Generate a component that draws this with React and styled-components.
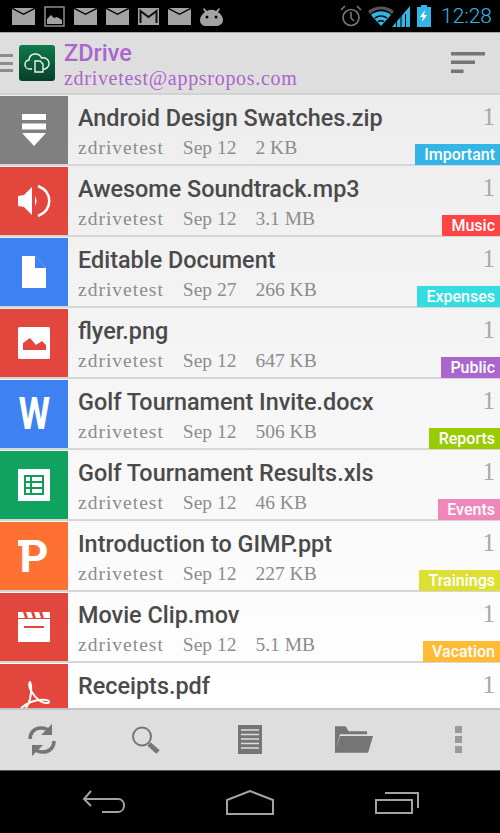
import React from "react";
import styled, { createGlobalStyle } from "styled-components";

const GlobalStyle = createGlobalStyle`
  html, body {
    margin: 0;
    padding: 0;
    background: #000;
    font-family: Roboto, sans-serif;
  }
`;

const Screen = styled.div`
  width: 500px;
  height: 833px;
  display: flex;
  flex-direction: column;
  overflow: hidden;
`;

const StatusBar = styled.div`
  height: 32px;
  flex: none;
  background: #000;
  display: flex;
  align-items: center;
  justify-content: space-between;
  padding: 0 8px 0 12px;
  box-sizing: border-box;
`;

const StatusGroup = styled.div`
  display: flex;
  align-items: center;
  gap: ${(p) => p.$gap || 0}px;
`;

const Clock = styled.span`
  font: 300 21px/32px Roboto, sans-serif;
  color: #33b5e5;
  margin-left: 10px;
`;

const Header = styled.div`
  height: 63px;
  flex: none;
  box-sizing: border-box;
  background: #dedede;
  border-top: 1px solid #a8a8a8;
  border-bottom: 2px solid #d2d2d2;
  display: flex;
  align-items: center;
  padding-right: 15px;
`;

const Hamburger = styled.div`
  width: 13px;
  height: 18px;
  margin-right: 6px;
  display: flex;
  flex-direction: column;
  justify-content: space-between;
  i {
    display: block;
    height: 3px;
    background: #8c8c8c;
  }
`;

const Logo = styled.div`
  width: 36px;
  height: 36px;
  border-radius: 3px;
  background: linear-gradient(#0f7a4c, #06402a);
  display: flex;
  align-items: center;
  justify-content: center;
  margin-right: 9px;
`;

const AppInfo = styled.div`
  flex: 1;
  color: #aa66cc;
  padding-top: 3px;
`;

const AppName = styled.div`
  font: 500 23.5px/27px Roboto, sans-serif;
`;

const AppMail = styled.div`
  font: 400 20px/23px "Liberation Serif", serif;
  letter-spacing: 0.7px;
`;

const List = styled.div`
  flex: 1;
  min-height: 0;
  overflow: hidden;
  background: linear-gradient(#ededed, #ffffff);
`;

const Row = styled.div`
  height: 71px;
  box-sizing: border-box;
  padding-top: 1px;
  border-bottom: 2px solid #d6d6d6;
  display: flex;
`;

const Tile = styled.div`
  width: 68px;
  height: 68px;
  flex: none;
  background: ${(p) => p.$color};
  display: flex;
  align-items: center;
  justify-content: center;
  color: #fff;
`;

const Body = styled.div`
  flex: 1;
  padding: 6px 0 0 10px;
  min-width: 0;
`;

const Title = styled.div`
  font: 500 23.4px/32px Roboto, sans-serif;
  color: #4a4a4a;
  white-space: nowrap;
`;

const Meta = styled.div`
  display: flex;
  gap: 19px;
  margin-top: 2px;
  font: 400 19.5px/24px "Liberation Serif", serif;
  color: #8c8c8c;
`;

const Owner = styled.span`
  letter-spacing: 1px;
`;

const Side = styled.div`
  flex: none;
  display: flex;
  flex-direction: column;
  align-items: flex-end;
  justify-content: space-between;
  height: 69px;
`;

const Count = styled.span`
  font: 400 25px/32px "Liberation Serif", serif;
  color: #a8a8a8;
  padding: 5px 5px 0 0;
`;

const Tag = styled.span`
  height: 21px;
  padding: 0 5px 0 9.5px;
  background: ${(p) => p.$color};
  color: #fff;
  font: 500 16px/21px Roboto, sans-serif;
`;

const Toolbar = styled.div`
  height: 62px;
  flex: none;
  box-sizing: border-box;
  background: #dedede;
  border-top: 2px solid #c4c4c4;
  display: flex;
  justify-content: space-between;
  align-items: center;
  padding: 0 23px 1px;
`;

const ToolButton = styled.div`
  width: 38px;
  display: flex;
  justify-content: center;
`;

const NavBar = styled.div`
  height: 63px;
  flex: none;
  background: #000;
  border-top: 1px solid #555;
  display: flex;
  justify-content: space-between;
  align-items: center;
  padding: 0 80px 0 82px;
  box-sizing: border-box;
`;

const WordLetter = styled.span`
  font: 700 44px/1 Roboto, sans-serif;
  color: #fff;
  transform: scaleX(0.82);
`;

const SlideLetter = styled.span`
  position: relative;
  font: 700 45px/1 Roboto, sans-serif;
  color: #fff;
  &::before {
    content: "";
    position: absolute;
    left: -1px;
    top: 6px;
    width: 8px;
    height: 6px;
    background: #fff;
  }
`;

const Mail = () => (
  <svg width="23" height="17" viewBox="0 0 23 17">
    <path fill="#a3a3a3" d="M0 1l11.5 6L23 1v16H0zM1 0h21l-10.5 5.5z" />
  </svg>
);

const StatusIcons = () => (
  <StatusGroup $gap={9}>
    <Mail />
    <svg width="21" height="21" viewBox="0 0 21 21">
      <rect x="1" y="1" width="19" height="19" fill="none" stroke="#8f8f8f" strokeWidth="1.5" />
      <path fill="#a3a3a3" d="M3 18v-5l4-4 3 3 3-1 5 3v4z" />
    </svg>
    <Mail />
    <Mail />
    <svg width="21" height="17" viewBox="0 0 21 17">
      <rect width="21" height="17" fill="#a3a3a3" />
      <path fill="none" stroke="#111" strokeWidth="2" d="M2.5 15V3l8 6 8-6v12" />
    </svg>
    <Mail />
    <svg width="23" height="19" viewBox="0 0 23 19">
      <path fill="#a3a3a3" d="M4 1l3 3a10 10 0 0 1 9 0l3-3 1 1-2 3c3 2 5 5 5 8 0 4-4 6-7 6H6c-3 0-6-2-6-6 0-3 2-6 5-8L3 2z" />
      <circle cx="7" cy="10" r="1.5" fill="#000" />
      <circle cx="16" cy="10" r="1.5" fill="#000" />
    </svg>
  </StatusGroup>
);

const SystemIcons = () => (
  <StatusGroup>
    <svg width="22" height="22" viewBox="0 0 22 22">
      <circle cx="11" cy="12.5" r="8" fill="none" stroke="#777" strokeWidth="1.6" />
      <path fill="none" stroke="#777" strokeWidth="1.6" d="M11 7v6l3 3M1 5l4-4M21 5l-4-4" />
    </svg>
    <svg width="26" height="20" viewBox="0 0 26 20" style={{ marginLeft: 6 }}>
      <path fill="#555" d="M0 5C7-1 19-1 26 5l-2 3C17 2 9 2 2 8z" />
      <path fill="#33b5e5" d="M3 9c6-5 14-5 20 0L13 20z" />
      <path fill="#000" d="M6.500 11.500c4-3 9-3 13 0l-1 1.300c-3.500-2.600-7.500-2.600-11 0zM9.500 15c2-1.500 5-1.500 7 0l-1 1.200c-1.500-1-3.500-1-5 0z" />
    </svg>
    <svg width="18" height="21" viewBox="0 0 18 21" style={{ marginLeft: -2 }}>
      <path fill="#33b5e5" d="M0 21L18 0v21z" />
      <path fill="#000" d="M4 8h1v13H4zM8.500 8h1v13h-1zM13 8h1v13h-1z" />
    </svg>
    <svg width="14" height="22" viewBox="0 0 14 22" style={{ marginLeft: 7 }}>
      <path fill="#33b5e5" d="M4 0h6v2h4v20H0V2h4z" />
      <path fill="#fff" d="M8 5L3 12h3l-1 5 5-7H7z" />
    </svg>
    <Clock>12:28</Clock>
  </StatusGroup>
);

const CloudLogo = () => (
  <svg width="26" height="22" viewBox="0 0 26 22" fill="none" stroke="#f2f2f2" strokeWidth="1.4">
    <path d="M8 17H6a4.500 4.500 0 0 1-1-9 6.500 6.500 0 0 1 12.500-2A5.500 5.500 0 0 1 21 17h-2" />
    <path fill="#0b5a39" d="M11 9h5l3 3v8h-8z" />
  </svg>
);

const SortIcon = () => (
  <svg width="34" height="22" viewBox="0 0 34 22" fill="#757575">
    <rect width="34" height="3.500" />
    <rect y="8.500" width="24" height="3.500" />
    <rect y="17.500" width="12.500" height="3.500" />
  </svg>
);

const ArchiveIcon = () => (
  <svg width="24" height="32" viewBox="0 0 24 32" fill="#fff">
    <rect width="24" height="6" />
    <rect y="9.500" width="24" height="6" />
    <path d="M0 19h24L12 32z" />
  </svg>
);

const AudioIcon = () => (
  <svg width="34" height="34" viewBox="0 0 34 34">
    <path fill="#fff" d="M1 12l6-1 8-8v28l-8-8-6-1z" />
    <path fill="#fff" d="M18 12c2 3 2 7 0 10z" />
    <path fill="none" stroke="#fff" strokeWidth="2.500" d="M21 2c15 6 15 24 0 30" />
  </svg>
);

const DocIcon = () => (
  <svg width="24" height="32" viewBox="0 0 24 32">
    <path fill="#fff" d="M0 0h13l11 12v20H0z" />
    <path fill="#3d82f0" d="M13 0l11 12H13z" />
  </svg>
);

const ImageIcon = () => (
  <svg width="32" height="32" viewBox="0 0 32 32">
    <rect width="32" height="32" rx="1.500" fill="#fff" />
    <path fill="#e2463c" d="M5 23v-7l7-5 6 7 6-4 4 4v5z" />
  </svg>
);

const SheetIcon = () => (
  <svg width="32" height="32" viewBox="0 0 32 32">
    <rect width="32" height="32" fill="#fff" />
    <path fill="none" stroke="#0f9d58" strokeWidth="2" d="M7 7h18v18H7zM7 13h18M7 19h18M13 7v18" />
  </svg>
);

const ClapIcon = () => (
  <svg width="32" height="30" viewBox="0 0 32 30">
    <path fill="#fff" d="M0 0h32v6H0zM0 7h32v23H0z" />
    <path fill="#e2463c" d="M5 0h3l2 6H7zM13 0h3l2 6h-3zM21 0h3l2 6h-3zM6 14h20v2H6z" />
  </svg>
);

const PdfIcon = () => (
  <svg width="34" height="34" viewBox="0 0 34 34" fill="none" stroke="#fff" strokeWidth="2">
    <path d="M13 1c-3 4 3 14 10 19 3 2 9 3 9 1 0-3-10-3-18 0-6 2-13 8-11 10 2 2 8-5 10-13 1-5 2-13 0-17z" />
  </svg>
);

const files = [
  { name: "Android Design Swatches.zip", date: "Sep 12", size: "2 KB", tag: "Important", tagColor: "#33b5e5", color: "#808080", icon: <ArchiveIcon /> },
  { name: "Awesome Soundtrack.mp3", date: "Sep 12", size: "3.1 MB", tag: "Music", tagColor: "#ff4444", color: "#e2463c", icon: <AudioIcon /> },
  { name: "Editable Document", date: "Sep 27", size: "266 KB", tag: "Expenses", tagColor: "#33dde0", color: "#3d82f0", icon: <DocIcon /> },
  { name: "flyer.png", date: "Sep 12", size: "647 KB", tag: "Public", tagColor: "#aa66cc", color: "#e2463c", icon: <ImageIcon /> },
  { name: "Golf Tournament Invite.docx", date: "Sep 12", size: "506 KB", tag: "Reports", tagColor: "#99cc00", color: "#3d82f0", icon: <WordLetter>W</WordLetter> },
  { name: "Golf Tournament Results.xls", date: "Sep 12", size: "46 KB", tag: "Events", tagColor: "#ee88bb", color: "#10a35f", icon: <SheetIcon /> },
  { name: "Introduction to GIMP.ppt", date: "Sep 12", size: "227 KB", tag: "Trainings", tagColor: "#dde033", color: "#ff7133", icon: <SlideLetter>P</SlideLetter> },
  { name: "Movie Clip.mov", date: "Sep 12", size: "5.1 MB", tag: "Vacation", tagColor: "#ffbb33", color: "#e2463c", icon: <ClapIcon /> },
  { name: "Receipts.pdf", date: "Sep 12", size: "1.2 MB", color: "#e2463c", icon: <PdfIcon /> },
];

const FileRow = ({ file }) => (
  <Row>
    <Tile $color={file.color}>{file.icon}</Tile>
    <Body>
      <Title>{file.name}</Title>
      <Meta>
        <Owner>zdrivetest</Owner>
        <span>{file.date}</span>
        <span>{file.size}</span>
      </Meta>
    </Body>
    <Side>
      <Count>1</Count>
      {file.tag && <Tag $color={file.tagColor}>{file.tag}</Tag>}
    </Side>
  </Row>
);

const App = () => (
  <Screen>
    <GlobalStyle />
    <StatusBar>
      <StatusIcons />
      <SystemIcons />
    </StatusBar>
    <Header>
      <Hamburger>
        <i />
        <i />
        <i />
      </Hamburger>
      <Logo>
        <CloudLogo />
      </Logo>
      <AppInfo>
        <AppName>ZDrive</AppName>
        <AppMail>zdrivetest@appsropos.com</AppMail>
      </AppInfo>
      <SortIcon />
    </Header>
    <List>
      {files.map((f) => (
        <FileRow key={f.name} file={f} />
      ))}
    </List>
    <Toolbar>
      <ToolButton>
        <svg width="30" height="32" viewBox="0 0 30 32" fill="none" stroke="#757575" strokeWidth="3.500">
          <path d="M3 15C3 8 8 4 14 4c4 0 7 1 9 4M27 17c0 7-5 11-11 11-4 0-7-1-9-4" />
          <path fill="#757575" stroke="none" d="M25 0v11H14zM5 32V21h11z" />
        </svg>
      </ToolButton>
      <ToolButton>
        <svg width="30" height="30" viewBox="0 0 30 30" fill="none" stroke="#757575">
          <circle cx="11" cy="11.500" r="9" strokeWidth="2" />
          <path strokeWidth="5" d="M18 19l9 8" />
        </svg>
      </ToolButton>
      <ToolButton>
        <svg width="24" height="29" viewBox="0 0 24 29">
          <rect width="24" height="29" fill="#757575" />
          <path stroke="#dedede" strokeWidth="1.500" d="M3 5h18M3 9.500h18M3 14h18M3 18.500h18M3 23h18" />
        </svg>
      </ToolButton>
      <ToolButton>
        <svg width="38" height="27" viewBox="0 0 39 27">
          <path fill="#757575" d="M0 0h11l3 5h19v3H5L2 20v7H0z" />
          <path fill="#757575" d="M5 10h34l-5 17H0z" />
        </svg>
      </ToolButton>
      <ToolButton>
        <svg width="7" height="27" viewBox="0 0 7 27" fill="#9a9a9a">
          <rect width="7" height="7" />
          <rect y="10" width="7" height="7" />
          <rect y="20" width="7" height="7" />
        </svg>
      </ToolButton>
    </Toolbar>
    <NavBar>
      <svg width="44" height="24" viewBox="0 0 44 24" fill="none" stroke="#a3a3a3" strokeWidth="2">
        <path d="M9 1L2 9l7 7M2 9h34c8 0 8 13 0 13H20" />
      </svg>
      <svg width="48" height="25" viewBox="0 0 48 25" fill="none" stroke="#a3a3a3" strokeWidth="2">
        <path d="M1 10L24 1l23 9v14H1z" />
      </svg>
      <svg width="46" height="24" viewBox="0 0 46 24" fill="none" stroke="#a3a3a3" strokeWidth="2">
        <path d="M11 3h33v15" />
        <path d="M2 10h36v13H2z" />
      </svg>
    </NavBar>
  </Screen>
);

export default App;
